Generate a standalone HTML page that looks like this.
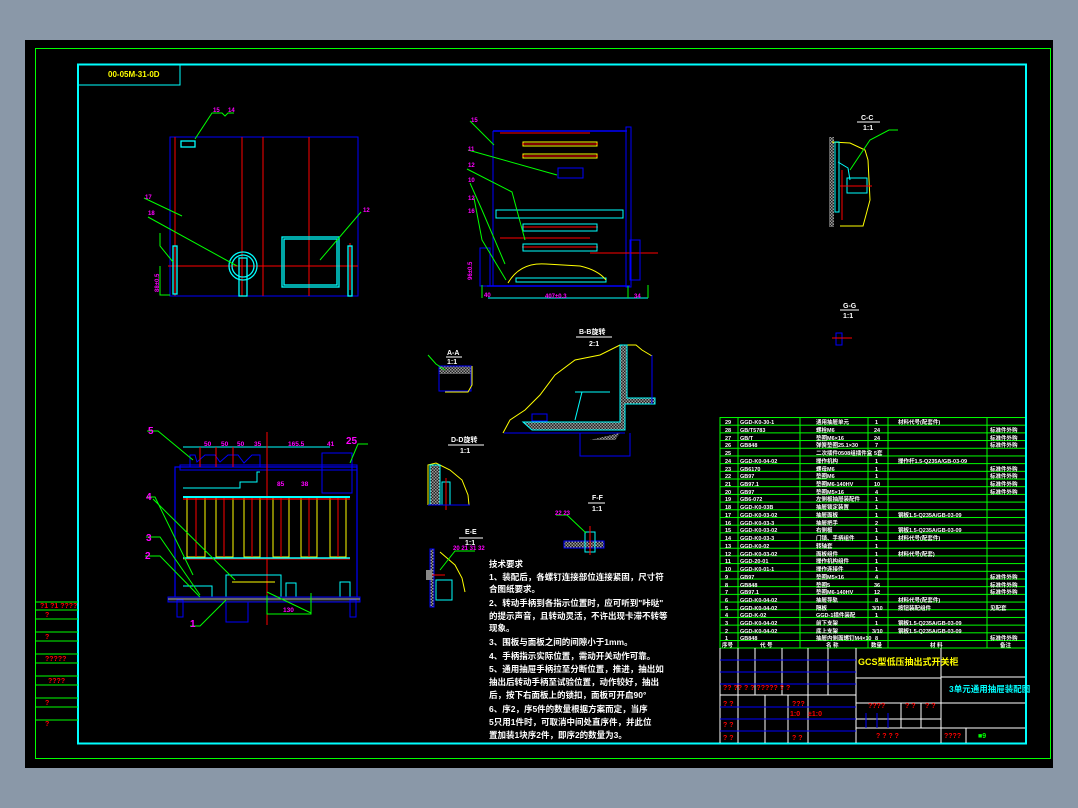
<!DOCTYPE html>
<html><head><meta charset="utf-8"><style>
html,body{margin:0;padding:0;background:#8a98a8;}
svg{display:block}
text{font-family:"Liberation Sans","Noto Sans CJK SC",sans-serif;font-weight:bold}
</style></head><body>
<svg width="1078" height="808" viewBox="0 0 1078 808" xmlns="http://www.w3.org/2000/svg">
<defs>
<pattern id="rows" x="0" y="417" width="10" height="7.69" patternUnits="userSpaceOnUse"><rect width="10" height="1" fill="#00ff00"/></pattern>
<pattern id="hatch" width="3" height="3" patternUnits="userSpaceOnUse"><rect width="3" height="3" fill="#222"/><rect width="1.5" height="1.5" fill="#999"/><rect x="1.5" y="1.5" width="1.5" height="1.5" fill="#999"/></pattern>
</defs>
<rect x="25" y="40" width="1028" height="728" fill="#000"/>
<rect x="35.5" y="48.5" width="1015" height="710" fill="none" stroke="#00ff00" stroke-width="1"/>
<rect x="78" y="64.5" width="948" height="679" fill="none" stroke="#00ffff" stroke-width="2"/>
<!-- header box -->
<polyline points="78,85 180,85 180,65" fill="none" stroke="#00ffff" stroke-width="1"/>
<text x="108" y="77" font-size="8" fill="#ffff00">00-05M-31-0D</text>
<!-- left strip -->
<g stroke="#00ff00" stroke-width="1">
<line x1="35" y1="602" x2="78" y2="602"/><line x1="35" y1="610" x2="78" y2="610"/>
<line x1="35" y1="619" x2="78" y2="619"/><line x1="35" y1="632" x2="78" y2="632"/>
<line x1="35" y1="641" x2="78" y2="641"/><line x1="35" y1="654" x2="78" y2="654"/>
<line x1="35" y1="663" x2="78" y2="663"/><line x1="35" y1="676" x2="78" y2="676"/>
<line x1="35" y1="685" x2="78" y2="685"/><line x1="35" y1="698" x2="78" y2="698"/>
<line x1="35" y1="707" x2="78" y2="707"/><line x1="35" y1="720" x2="78" y2="720"/>
</g>
<g fill="#ff0000" font-size="7">
<text x="40" y="608">?1 ?1 ????</text><text x="45" y="617">?</text><text x="45" y="639">?</text>
<text x="45" y="661">?????</text><text x="48" y="683">????</text><text x="45" y="705">?</text><text x="45" y="726">?</text>
</g>

<!-- top-left front view -->
<g fill="none">
<rect x="170" y="137" width="188" height="159" stroke="#0000ff"/>
<g stroke="#ff0000"><line x1="175" y1="137" x2="175" y2="296"/><line x1="242" y1="137" x2="242" y2="296"/><line x1="263" y1="137" x2="263" y2="296"/><line x1="309" y1="137" x2="309" y2="296"/><line x1="168" y1="266" x2="358" y2="266"/><line x1="350" y1="243" x2="350" y2="290"/></g>
<g stroke="#00ffff" stroke-width="1.3">
<rect x="181" y="141" width="14" height="6"/><rect x="282" y="237" width="57" height="50"/><rect x="284" y="239" width="53" height="46"/>
<circle cx="243" cy="266" r="14"/><circle cx="243" cy="266" r="11"/><rect x="239" y="258" width="8" height="38"/>
<rect x="173" y="246" width="4" height="48"/><rect x="348" y="246" width="4" height="50"/>
</g>
<g stroke="#00ff00"><polyline points="195,139 212,113 222,113 225,116 228,113 234,113"/><polyline points="144,198 182,216"/><polyline points="148,217 237,266"/><polyline points="361,212 320,260"/><polyline points="160,233 160,246 173,262"/><polyline points="160,266 160,295 170,295"/></g>
</g>
<g fill="#ff00ff" font-size="6"><text x="213" y="112">15</text><text x="228" y="112">14</text><text x="145" y="199">17</text><text x="148" y="215">18</text><text x="363" y="212">12</text></g>
<text x="0" y="0" font-size="6" fill="#ff00ff" transform="translate(159,292) rotate(-90)">88±0.5</text>

<!-- side view -->
<g fill="none">
<polyline points="493,131 627,131" stroke="#0000ff" stroke-width="1.5"/>
<rect x="626" y="127" width="5" height="160" stroke="#0000ff"/>
<line x1="493" y1="131" x2="493" y2="286" stroke="#0000ff"/>
<line x1="487" y1="286" x2="630" y2="286" stroke="#0000ff" stroke-width="1.5"/>
<line x1="500" y1="133" x2="590" y2="133" stroke="#ff0000"/>
<g stroke="#ffff00"><rect x="523" y="142" width="74" height="4"/><rect x="523" y="154" width="74" height="4"/></g>
<g stroke="#ff0000"><line x1="522" y1="144" x2="598" y2="144"/><line x1="522" y1="156" x2="598" y2="156"/><line x1="522" y1="227" x2="598" y2="227"/><line x1="522" y1="247" x2="598" y2="247"/><line x1="500" y1="238" x2="590" y2="238"/><line x1="590" y1="253" x2="658" y2="253"/></g>
<g stroke="#00ffff"><rect x="496" y="210" width="127" height="8"/><rect x="523" y="224" width="74" height="7"/><rect x="523" y="244" width="74" height="7"/><line x1="488" y1="298" x2="648" y2="298"/><rect x="516" y="278" width="90" height="4"/></g>
<rect x="558" y="168" width="25" height="10" stroke="#0000ff"/>
<rect x="480" y="248" width="10" height="38" stroke="#0000ff"/>
<rect x="630" y="240" width="10" height="40" stroke="#0000ff"/>
<path d="M508,283 Q520,262 546,264 L580,266 Q598,270 606,280" stroke="#ffff00"/>
<g stroke="#00ff00"><polyline points="470,121 494,145"/><polyline points="468,150 557,175"/><polyline points="467,169 512,192 525,240"/><polyline points="470,183 482,210 505,264"/><polyline points="474,198 482,240 506,280"/><polyline points="482,285 482,298"/><polyline points="648,285 648,298"/><polyline points="628,286 628,298"/></g>
</g>
<g fill="#ff00ff" font-size="6"><text x="471" y="122">15</text><text x="468" y="151">11</text><text x="468" y="167">12</text><text x="468" y="182">10</text><text x="468" y="200">12</text><text x="468" y="213">16</text><text x="484" y="297">40</text><text x="545" y="298">407±0.3</text><text x="634" y="298">34</text></g>
<text font-size="6" fill="#ff00ff" transform="translate(472,280) rotate(-90)">96±0.5</text>

<!-- C-C -->
<g fill="none">
<line x1="857" y1="122" x2="880" y2="122" stroke="#fff"/>
<rect x="829" y="137" width="5" height="90" fill="url(#hatch)" stroke="none"/>
<path d="M832,142 L850,143 L865,150 L868,160 L870,200 L866,215 L863,226 L840,226" stroke="#ffff00"/>
<g stroke="#00ffff"><rect x="835" y="142" width="4" height="70"/><rect x="847" y="178" width="20" height="15"/><polyline points="838,162 848,168 850,180"/></g>
<line x1="840" y1="186" x2="872" y2="186" stroke="#ff0000"/><line x1="842" y1="170" x2="842" y2="220" stroke="#ff0000"/>
<polyline points="850,170 870,140 889,130 898,130" stroke="#00ff00"/>
<line x1="840" y1="310" x2="859" y2="310" stroke="#fff"/>
<rect x="836" y="333" width="6" height="12" stroke="#0000ff"/><line x1="832" y1="338" x2="852" y2="338" stroke="#ff0000"/>
</g>
<text x="861" y="120" font-size="7" fill="#fff">C-C</text><text x="863" y="130" font-size="7" fill="#fff">1:1</text>
<text x="843" y="308" font-size="7" fill="#fff">G-G</text><text x="843" y="318" font-size="7" fill="#fff">1:1</text>

<!-- A-A -->
<g fill="none">
<line x1="446" y1="357" x2="462" y2="357" stroke="#fff"/>
<rect x="439" y="366" width="32" height="8" fill="url(#hatch)" stroke="none"/>
<rect x="439" y="366" width="32" height="25" stroke="#0000ff"/>
<path d="M445,392 L468,392 L472,385 L472,366" stroke="#ffff00"/>
<polyline points="428,355 436,364 445,370" stroke="#00ff00"/>
</g>
<text x="447" y="355" font-size="7" fill="#fff">A-A</text><text x="447" y="364" font-size="7" fill="#fff">1:1</text>

<!-- B-B rotate -->
<g fill="none">
<line x1="576" y1="337" x2="612" y2="337" stroke="#fff"/>
<path d="M503,433 L510,420 L525,410 L540,395 L555,375 L575,360 L600,355 L620,345 L636,345 L642,350 L652,356" stroke="#ffff00"/>
<polygon points="523,422 620,422 620,345 627,345 627,398 655,398 655,404 625,404 625,430 532,430" fill="url(#hatch)" stroke="#00ffff"/>
<line x1="652" y1="355" x2="652" y2="404" stroke="#0000ff"/>
<line x1="504" y1="433" x2="625" y2="433" stroke="#0000ff"/>
<rect x="532" y="414" width="15" height="7" stroke="#0000ff"/>
<path d="M582,392 L575,420 M575,392 L610,392" stroke="#00ffff"/>
<path d="M580,433 L580,456 L630,456 L630,433" stroke="#0000ff"/>
<path d="M590,440 L615,440 L620,433" fill="url(#hatch)" stroke="none"/>
</g>
<text x="579" y="334" font-size="7" fill="#fff">B-B旋转</text><text x="589" y="346" font-size="7" fill="#fff">2:1</text>

<!-- D-D -->
<g fill="none">
<line x1="448" y1="445" x2="484" y2="445" stroke="#fff"/>
<path d="M428,505 L428,465 L436,463 L450,470 L462,480 L468,495 L469,505" stroke="#ffff00"/>
<rect x="430" y="465" width="10" height="40" fill="url(#hatch)" stroke="#00ffff"/>
<rect x="442" y="482" width="8" height="23" stroke="#00ffff"/>
<line x1="446" y1="478" x2="446" y2="510" stroke="#ff0000"/>
<line x1="428" y1="505" x2="470" y2="505" stroke="#0000ff"/>
</g>
<text x="451" y="442" font-size="7" fill="#fff">D-D旋转</text><text x="460" y="453" font-size="7" fill="#fff">1:1</text>

<!-- E-E -->
<g fill="none">
<line x1="459" y1="538" x2="483" y2="538" stroke="#fff"/>
<rect x="430" y="549" width="4" height="58" fill="url(#hatch)" stroke="#0000ff"/>
<path d="M440,552 L455,565 L462,578 L465,592" stroke="#ffff00"/>
<rect x="436" y="580" width="16" height="20" stroke="#00ffff"/>
<rect x="426" y="570" width="6" height="10" fill="#888"/>
<line x1="432" y1="575" x2="445" y2="575" stroke="#ff0000"/>
<polyline points="440,570 455,551 475,551" stroke="#00ff00"/>
</g>
<text x="465" y="534" font-size="7" fill="#fff">E-E</text><text x="465" y="545" font-size="7" fill="#fff">1:1</text>
<text x="453" y="550" font-size="6" fill="#ff00ff">20 21 31 32</text>

<!-- F-F -->
<g fill="none">
<line x1="588" y1="503" x2="605" y2="503" stroke="#fff"/>
<rect x="564" y="541" width="40" height="7" fill="url(#hatch)" stroke="#0000ff"/>
<rect x="585" y="532" width="10" height="20" stroke="#00ffff"/>
<line x1="590" y1="526" x2="590" y2="555" stroke="#ff0000"/>
<polyline points="556,515 567,515 586,533" stroke="#00ff00"/>
</g>
<text x="592" y="500" font-size="7" fill="#fff">F-F</text><text x="592" y="511" font-size="7" fill="#fff">1:1</text>
<text x="555" y="515" font-size="6" fill="#ff00ff">22 23</text>

<!-- bottom-left view -->
<g fill="none">
<rect x="175" y="467" width="182" height="133" stroke="#0000ff" stroke-width="1.2"/>
<rect x="180" y="465" width="177" height="5" stroke="#0000ff"/>
<line x1="183" y1="447" x2="330" y2="447" stroke="#00ffff"/>
<g stroke="#0000ff"><path d="M190,467 L190,455 L195,455 L197,462 L205,455 L215,455 L220,462 L228,455 L238,455 L244,463 L252,455 L260,455 L260,467"/><rect x="322" y="453" width="30" height="40"/></g>
<g stroke="#ffff00"><rect x="187" y="497" width="18" height="60"/><rect x="216" y="497" width="17" height="60"/><rect x="244" y="497" width="16" height="60"/><rect x="273" y="497" width="16" height="60"/><rect x="301" y="497" width="16" height="60"/><rect x="330" y="497" width="16" height="60"/></g>
<g stroke="#ff0000"><line x1="183" y1="499" x2="350" y2="499" stroke-width="1.2"/><line x1="183" y1="559" x2="350" y2="559"/><line x1="267" y1="432" x2="267" y2="625"/><line x1="196" y1="498" x2="196" y2="557"/><line x1="224" y1="498" x2="224" y2="557"/><line x1="252" y1="498" x2="252" y2="557"/><line x1="281" y1="498" x2="281" y2="557"/><line x1="309" y1="498" x2="309" y2="557"/><line x1="338" y1="498" x2="338" y2="557"/><line x1="200" y1="447" x2="200" y2="467"/><line x1="216" y1="447" x2="216" y2="467"/><line x1="233" y1="447" x2="233" y2="467"/></g>
<g stroke="#00ffff"><line x1="183" y1="497" x2="350" y2="497" stroke-width="2"/><line x1="183" y1="558" x2="350" y2="558" stroke-width="1.5"/><rect x="226" y="575" width="55" height="25"/><path d="M183,488 L240,488 L240,482 L257,482 L257,472 L260,472"/><rect x="286" y="583" width="10" height="18"/><rect x="340" y="582" width="10" height="18"/><path d="M183,586 L212,586 L212,598"/></g>
<line x1="232" y1="582" x2="275" y2="582" stroke="#ffff00"/>
<rect x="168" y="597" width="192" height="5" stroke="#0000ff" fill="#222"/>
<line x1="168" y1="599" x2="360" y2="599" stroke="#aaa"/>
<rect x="226" y="602" width="22" height="20" stroke="#0000ff"/>
<rect x="177" y="600" width="6" height="17" stroke="#0000ff"/><rect x="350" y="600" width="6" height="17" stroke="#0000ff"/>
<line x1="267" y1="592" x2="311" y2="613" stroke="#00ff00" fill="none"/>
<path d="M267,595 L267,614 L311,614 L311,593" stroke="#00ff00"/>
<g stroke="#00ff00"><polyline points="147,431 158,431 193,460"/><polyline points="147,497 155,497 193,575"/><polyline points="146,537 160,537 200,595"/><polyline points="145,556 160,556 200,597"/><polyline points="190,626 200,626 226,600"/><polyline points="350,463 358,444 368,444"/><polyline points="153,499 235,580"/></g>
</g>
<g fill="#ff00ff" font-size="10"><text x="148" y="434">5</text><text x="146" y="500">4</text><text x="146" y="541">3</text><text x="145" y="559">2</text><text x="190" y="627">1</text><text x="346" y="444">25</text></g>
<g fill="#ff00ff" font-size="6.5"><text x="204" y="446">50</text><text x="221" y="446">50</text><text x="237" y="446">50</text><text x="254" y="446">35</text><text x="288" y="446">165.5</text><text x="327" y="446">41</text><text x="277" y="486">85</text><text x="301" y="486">38</text><text x="283" y="612">130</text></g>

<!-- technical notes -->
<g fill="#fff" font-size="8.5">
<text x="489" y="567">技术要求</text>
<text x="489" y="580">1、装配后，各螺钉连接部位连接紧固，尺寸符</text>
<text x="489" y="592">合图纸要求。</text>
<text x="489" y="606">2、转动手柄到各指示位置时，应可听到"咔哒"</text>
<text x="489" y="619">的提示声音，且转动灵活，不许出现卡滞不转等</text>
<text x="489" y="631">现象。</text>
<text x="489" y="645">3、围板与面板之间的间隙小于1mm。</text>
<text x="489" y="659">4、手柄指示实际位置，需动开关动作可靠。</text>
<text x="489" y="672">5、通用抽屉手柄拉至分断位置，推进，抽出如</text>
<text x="489" y="685">抽出后转动手柄至试验位置，动作较好，抽出</text>
<text x="489" y="698">后，按下右面板上的锁扣，面板可开启90°</text>
<text x="489" y="712">6、序2，序5件的数量根据方案而定，当序</text>
<text x="489" y="725">5只用1件时，可取消中间处直序件，并此位</text>
<text x="489" y="738">置加装1块序2件，即序2的数量为3。</text>
</g>

<!-- parts table -->
<rect x="720" y="417" width="305" height="231" fill="url(#rows)"/>
<g stroke="#00ff00" stroke-width="1">
<line x1="720" y1="417" x2="720" y2="648"/><line x1="738" y1="417" x2="738" y2="648"/><line x1="800" y1="417" x2="800" y2="648"/><line x1="868" y1="417" x2="868" y2="648"/><line x1="888" y1="417" x2="888" y2="648"/><line x1="987" y1="417" x2="987" y2="648"/>
<line x1="720" y1="648" x2="1025" y2="648"/>
</g>
<g fill="#fff" font-size="5.5">
<text x="725" y="424">29</text><text x="740" y="424">GGD-K0-30-1</text><text x="816" y="424">通用抽屉单元</text><text x="875" y="424">1</text><text x="898" y="424">材料代号(配套件)</text>
<text x="725" y="432">28</text><text x="740" y="432">GB/T5783</text><text x="816" y="432">螺栓M6</text><text x="874" y="432">24</text><text x="990" y="432">标准件外购</text>
<text x="725" y="440">27</text><text x="740" y="440">GB/T</text><text x="816" y="440">垫圈M6×16</text><text x="874" y="440">24</text><text x="990" y="440">标准件外购</text>
<text x="725" y="447">26</text><text x="740" y="447">GB848</text><text x="816" y="447">弹簧垫圈25.1×30</text><text x="875" y="447">7</text><text x="990" y="447">标准件外购</text>
<text x="725" y="455">25</text><text x="816" y="455">二次插件0508组插件盒</text><text x="874" y="455">5套</text>
<text x="725" y="463">24</text><text x="740" y="463">GGD-K0-04-02</text><text x="816" y="463">操作机构</text><text x="875" y="463">1</text><text x="898" y="463">操作杆1.5-Q235A/GB-03-09</text>
<text x="725" y="471">23</text><text x="740" y="471">GB6170</text><text x="816" y="471">螺母M6</text><text x="875" y="471">1</text><text x="990" y="471">标准件外购</text>
<text x="725" y="478">22</text><text x="740" y="478">GB97</text><text x="816" y="478">垫圈M6</text><text x="875" y="478">1</text><text x="990" y="478">标准件外购</text>
<text x="725" y="486">21</text><text x="740" y="486">GB97.1</text><text x="816" y="486">垫圈M6-140HV</text><text x="874" y="486">10</text><text x="990" y="486">标准件外购</text>
<text x="725" y="494">20</text><text x="740" y="494">GB97</text><text x="816" y="494">垫圈M5×16</text><text x="875" y="494">4</text><text x="990" y="494">标准件外购</text>
<text x="725" y="501">19</text><text x="740" y="501">GB6-072</text><text x="816" y="501">左侧板抽屉装配件</text><text x="875" y="501">1</text>
<text x="725" y="509">18</text><text x="740" y="509">GGD-K0-03B</text><text x="816" y="509">抽屉锁定装置</text><text x="875" y="509">1</text>
<text x="725" y="517">17</text><text x="740" y="517">GGD-K0-03-02</text><text x="816" y="517">抽屉面板</text><text x="875" y="517">1</text><text x="898" y="517">钢板1.5-Q235A/GB-03-09</text>
<text x="725" y="525">16</text><text x="740" y="525">GGD-K0-03-3</text><text x="816" y="525">抽屉把手</text><text x="875" y="525">2</text>
<text x="725" y="532">15</text><text x="740" y="532">GGD-K0-03-02</text><text x="816" y="532">右侧板</text><text x="875" y="532">1</text><text x="898" y="532">钢板1.5-Q235A/GB-03-09</text>
<text x="725" y="540">14</text><text x="740" y="540">GGD-K0-03-3</text><text x="816" y="540">门锁、手柄组件</text><text x="875" y="540">1</text><text x="898" y="540">材料代号(配套件)</text>
<text x="725" y="548">13</text><text x="740" y="548">GGD-K0-02</text><text x="816" y="548">转轴套</text><text x="875" y="548">1</text>
<text x="725" y="556">12</text><text x="740" y="556">GGD-K0-03-02</text><text x="816" y="556">面板组件</text><text x="875" y="556">1</text><text x="898" y="556">材料代号(配套)</text>
<text x="725" y="563">11</text><text x="740" y="563">GGD-20-01</text><text x="816" y="563">操作机构组件</text><text x="875" y="563">1</text>
<text x="725" y="571">10</text><text x="740" y="571">GGD-K0-01-1</text><text x="816" y="571">操作连接件</text><text x="875" y="571">1</text>
<text x="725" y="579">9</text><text x="740" y="579">GB97</text><text x="816" y="579">垫圈M5×16</text><text x="875" y="579">4</text><text x="990" y="579">标准件外购</text>
<text x="725" y="587">8</text><text x="740" y="587">GB848</text><text x="816" y="587">垫圈5</text><text x="874" y="587">36</text><text x="990" y="587">标准件外购</text>
<text x="725" y="594">7</text><text x="740" y="594">GB97.1</text><text x="816" y="594">垫圈M6-140HV</text><text x="874" y="594">12</text><text x="990" y="594">标准件外购</text>
<text x="725" y="602">6</text><text x="740" y="602">GGD-K0-04-02</text><text x="816" y="602">抽屉导轨</text><text x="875" y="602">8</text><text x="898" y="602">材料代号(配套件)</text>
<text x="725" y="610">5</text><text x="740" y="610">GGD-K0-04-02</text><text x="816" y="610">隔板</text><text x="872" y="610">3/10</text><text x="898" y="610">按钮装配组件</text><text x="990" y="610">见配套</text>
<text x="725" y="617">4</text><text x="740" y="617">GGD-K-02</text><text x="816" y="617">GGD-1插件装配</text><text x="875" y="617">1</text>
<text x="725" y="625">3</text><text x="740" y="625">GGD-K0-04-02</text><text x="816" y="625">前下支架</text><text x="875" y="625">1</text><text x="898" y="625">钢板1.5-Q235A/GB-03-09</text>
<text x="725" y="633">2</text><text x="740" y="633">GGD-K0-04-02</text><text x="816" y="633">底上支架</text><text x="872" y="633">3/10</text><text x="898" y="633">钢板1.5-Q235A/GB-03-09</text>
<text x="725" y="640">1</text><text x="740" y="640">GB848</text><text x="816" y="640">抽屉内侧面螺钉M4×10</text><text x="875" y="640">8</text><text x="990" y="640">标准件外购</text>
<text x="722" y="647">序号</text><text x="760" y="647">代  号</text><text x="826" y="647">名  称</text><text x="871" y="647">数量</text><text x="930" y="647">材  料</text><text x="1000" y="647">备注</text>
</g>

<!-- title block -->
<g stroke="#fff" stroke-width="1" fill="none">
<line x1="720" y1="648" x2="720" y2="743"/>
<line x1="856" y1="648" x2="856" y2="743"/>
<line x1="941" y1="648" x2="941" y2="743"/>
<line x1="720" y1="695" x2="856" y2="695"/>
<line x1="738" y1="648" x2="738" y2="743"/><line x1="755" y1="648" x2="755" y2="695"/><line x1="782" y1="648" x2="782" y2="695"/><line x1="808" y1="648" x2="808" y2="695"/><line x1="828" y1="648" x2="828" y2="695"/>
<line x1="765" y1="695" x2="765" y2="743"/><line x1="788" y1="695" x2="788" y2="743"/><line x1="808" y1="695" x2="808" y2="743"/>
<line x1="856" y1="678" x2="941" y2="678"/><line x1="856" y1="703" x2="941" y2="703"/><line x1="856" y1="719" x2="941" y2="719"/><line x1="856" y1="728" x2="1025" y2="728"/>
<line x1="901" y1="703" x2="901" y2="728"/><line x1="921" y1="703" x2="921" y2="728"/>
<line x1="941" y1="703" x2="1025" y2="703"/><line x1="941" y1="677" x2="1025" y2="677"/>
<line x1="966" y1="728" x2="966" y2="743"/>
</g>
<g stroke="#0000ff" stroke-width="1">
<line x1="720" y1="660" x2="856" y2="660"/><line x1="720" y1="672" x2="856" y2="672"/><line x1="720" y1="684" x2="856" y2="684"/>
<line x1="720" y1="707" x2="856" y2="707"/><line x1="720" y1="719" x2="856" y2="719"/><line x1="720" y1="731" x2="856" y2="731"/>
<line x1="866" y1="713" x2="866" y2="728"/><line x1="877" y1="713" x2="877" y2="728"/><line x1="888" y1="713" x2="888" y2="728"/>
</g>
<text x="858" y="665" font-size="9" fill="#ffff00">GCS型低压抽出式开关柜</text>
<text x="949" y="692" font-size="8.5" fill="#00ffff">3单元通用抽屉装配图</text>
<g fill="#ff0000" font-size="7">
<text x="723" y="690">?? ?? ? ? ????? ? ?</text>
<text x="723" y="706">? ?</text><text x="792" y="706">???</text><text x="723" y="727">? ?</text><text x="723" y="740">? ?</text><text x="792" y="740">? ?</text>
<text x="790" y="716">1:0</text><text x="808" y="716">±1:0</text>
<text x="868" y="708">????</text><text x="905" y="708">? ?</text><text x="925" y="708">? ?</text>
<text x="876" y="738">?    ?    ?    ?</text><text x="944" y="738">????</text>
</g>
<text x="978" y="738" font-size="7" fill="#00ff00">■9</text>
</svg>
</body></html>
